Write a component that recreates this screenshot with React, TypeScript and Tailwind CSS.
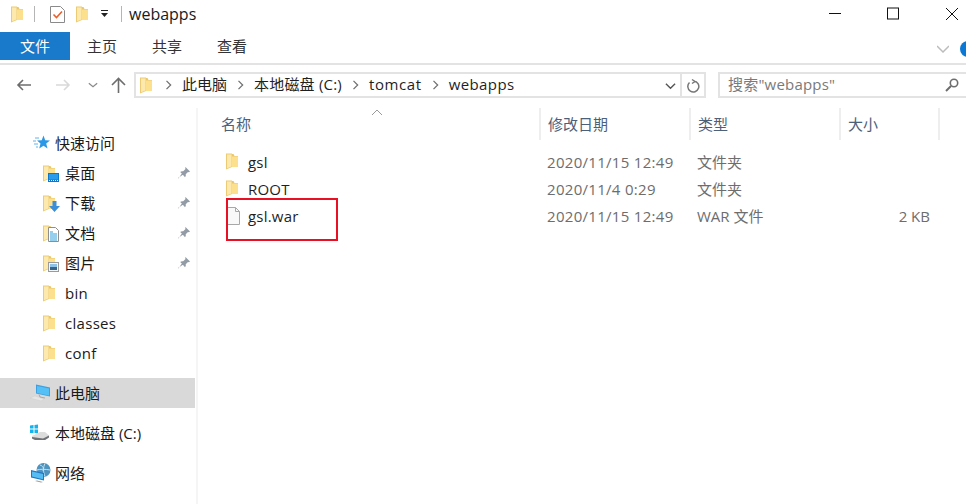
import React from 'react';

const Folder = ({ className = '' }: { className?: string }) => (
  <svg className={className} width="12" height="17" viewBox="0 0 12 17">
    <path d="M6 1h1.500l1 2H12v11H6z" fill="#e9c76e" />
    <path d="M6 3.500h6V14H6z" fill="#fde08d" />
    <path d="M0 .5h6V14l-6 2.500z" fill="#eccb74" />
    <path d="M1 1.500h4.500V13.500L1 15.200z" fill="#fde9ad" />
  </svg>
);

const Pin = () => (
  <svg width="14" height="14" viewBox="0 0 14 14">
    <path d="M8.500 1l4.500 4.500-1 .8-1-.3-2.300 2.300c.3 1.200 0 2.200-.7 3L4.800 7.600 1.500 12.500l-.5-.5 4.900-3.300-.1-.1-2.600-2.600c.8-.7 1.800-1 3-.7L8.500 3l-.3-1z" fill="#939ca6" />
  </svg>
);

const QuickIcon = () => (
  <svg width="17" height="16" viewBox="0 0 17 16">
    <path d="M10.500 .5l1.700 4.800 4.800.2-3.800 3 1.300 5-4-2.800-4.300 2.800 1.300-5-3.500-3 4.700-.2z" fill="#2a98e6" />
    <path d="M2 3h4M0 6h3M1 9h4M3 12h2" stroke="#5fb4ee" strokeWidth="1" />
  </svg>
);

const DesktopFolder = () => (
  <div className="relative w-[18px] h-[17px]">
    <Folder />
    <svg className="absolute left-[5px] top-[8px]" width="11" height="9" viewBox="0 0 11 9">
      <rect width="11" height="9" fill="#0a78d0" />
      <rect x="1" y="1" width="9" height="5.500" fill="#2b9bea" />
      <path d="M1 7.500h9" stroke="#e8f4fc" strokeDasharray="1 1" />
    </svg>
  </div>
);

const DownloadFolder = () => (
  <div className="relative w-[18px] h-[17px]">
    <Folder />
    <svg className="absolute left-[6px] top-[6px]" width="11" height="11" viewBox="0 0 11 11">
      <path d="M3.500 0h4v5H11l-5.500 6L0 5h3.500z" fill="#3a8fd8" />
    </svg>
  </div>
);

const DocFolder = () => (
  <div className="relative w-[18px] h-[17px]">
    <Folder />
    <svg className="absolute left-[5px] top-[2px]" width="11" height="15" viewBox="0 0 11 15">
      <path d="M.5.500h7l3 3v11H.5z" fill="#fff" stroke="#8e8e8e" />
      <path d="M2 5h3M2 7h7M2 9h7M2 11h7M2 13h7" stroke="#2d9fdc" />
    </svg>
  </div>
);

const PictureFolder = () => (
  <div className="relative w-[18px] h-[17px]">
    <Folder />
    <svg className="absolute left-[5px] top-[7px]" width="11" height="10" viewBox="0 0 11 10">
      <rect x=".5" y=".5" width="10" height="9" fill="#f4f6f8" stroke="#9a9a9a" />
      <rect x="2" y="2" width="7" height="3" fill="#8fc2e8" />
      <rect x="2" y="5" width="7" height="3" fill="#38648c" />
    </svg>
  </div>
);

const ThisPc = () => (
  <svg width="20" height="18" viewBox="0 0 20 18">
    <path d="M6 .5l14 3v9L6 9.500z" fill="#3c9fe0" />
    <path d="M7 2l12 2.500v7L7 9z" fill="#55c0f5" />
    <path d="M0 14l5-2 9 3-3 2z" fill="#e6e6e6" stroke="#cfcfcf" strokeWidth=".5" />
    <path d="M9 10.500l1 2.500 5 1" fill="none" stroke="#a9a9a9" />
  </svg>
);

const DriveC = () => (
  <svg width="20" height="18" viewBox="0 0 20 18">
    <path d="M0 1.500l3.500-.5v3.500H0zM4.500 1L8 .5v4H4.500zM0 5.500h3.500V9H0zM4.500 5.500H8V9.500L4.500 9z" fill="#12b3ee" />
    <path d="M2 12l8-4h5l4 3.500v2l-4 2.500H5l-3-1.500z" fill="#dcdcdc" />
    <path d="M2 13l11 1.500 6-3v2L15 16H5l-3-1.500z" fill="#6f7275" />
  </svg>
);

const Network = () => (
  <svg width="20" height="21" viewBox="0 0 20 21">
    <circle cx="12.500" cy="7" r="7" fill="#4f93bf" />
    <path d="M9 2c3 1 4 3 3 6M6 7c3-1 8-1 13 0M14 .5c-2 4-2 8 0 13" stroke="#c3e3f3" fill="none" />
    <path d="M0 7l13 3v7.500L0 14.500z" fill="#1f78c0" />
    <path d="M1 8.500l11 2.500v5.300L1 13.500z" fill="#55bdf2" />
    <path d="M4 18l6 1.500 2-.5-6-1.500z" fill="#9a9a9a" />
  </svg>
);

const CheckDoc = () => (
  <svg width="15" height="17" viewBox="0 0 15 17">
    <path d="M.5.500h10l4 4v12H.5z" fill="#fff" stroke="#8a8a8a" />
    <path d="M3.500 8.500l3 3 5.500-6" fill="none" stroke="#e8602c" strokeWidth="1.600" />
  </svg>
);

const FileIcon = () => (
  <svg width="14" height="18" viewBox="0 0 14 18">
    <path d="M.5.500h9l4 4v13H.5z" fill="#f9f9f9" stroke="#a8a8a8" />
    <path d="M9.500.500v4h4" fill="none" stroke="#a8a8a8" />
  </svg>
);

const Chevron = ({ cls, d }: { cls: string; d: string }) => (
  <svg className={cls} viewBox="0 0 12 12" width="12" height="12">
    <path d={d} fill="none" stroke="currentColor" strokeWidth="1.500" />
  </svg>
);

const navItems = [
  { label: '桌面', icon: <DesktopFolder />, pin: true },
  { label: '下载', icon: <DownloadFolder />, pin: true },
  { label: '文档', icon: <DocFolder />, pin: true },
  { label: '图片', icon: <PictureFolder />, pin: true },
  { label: 'bin', icon: <Folder /> },
  { label: 'classes', icon: <Folder /> },
  { label: 'conf', icon: <Folder /> },
];

const files = [
  { name: 'gsl', date: '2020/11/15 12:49', type: '文件夹', size: '', icon: <Folder /> },
  { name: 'ROOT', date: '2020/11/4 0:29', type: '文件夹', size: '', icon: <Folder /> },
  { name: 'gsl.war', date: '2020/11/15 12:49', type: 'WAR 文件', size: '2 KB', icon: <FileIcon /> },
];

const crumbs = [
  { label: '此电脑', cls: '' },
  { label: '本地磁盘 (C:)', cls: 'tracking-[0.2px]' },
  { label: 'tomcat', cls: 'tracking-[0.6px]' },
  { label: 'webapps', cls: 'tracking-[0.4px]' },
];

export default function App() {
  return (
    <div className="w-[966px] h-[504px] overflow-hidden bg-white text-[15px] leading-5 text-[#1a1a1a] font-['Open_Sans','Noto_Sans_CJK_SC',sans-serif]">
      {/* title bar */}
      <div className="h-8 flex items-center pb-[4px]">
        <Folder className="ml-[11px]" />
        <div className="w-px h-4 bg-[#b5b5b5] ml-[11px]" />
        <div className="ml-[15px] flex"><CheckDoc /></div>
        <Folder className="ml-[11px]" />
        <svg className="ml-[12px]" width="9" height="8" viewBox="0 0 9 8">
          <path d="M1 .500h7" stroke="#222" />
          <path d="M1 3h7L4.500 7z" fill="#222" />
        </svg>
        <div className="w-px h-4 bg-[#b5b5b5] ml-[12px]" />
        <span className="ml-[7px] text-[16px]">webapps</span>
        <div className="ml-auto flex items-center">
          <svg width="58" height="14" viewBox="0 0 58 14">
            <path d="M0 6.500h12" stroke="#111" />
          </svg>
          <svg width="59" height="14" viewBox="0 0 59 14">
            <rect x=".5" y="1" width="11" height="11" fill="none" stroke="#111" />
          </svg>
          <svg width="20" height="14" viewBox="0 0 20 14">
            <path d="M0 1l12 12M12 1L0 13" stroke="#111" />
          </svg>
        </div>
      </div>

      {/* ribbon tabs */}
      <div className="h-[33px] border-b-2 border-[#e3e3e3] flex items-start">
        <div className="w-[70px] h-7 bg-[#1979ca] text-white flex items-center justify-center">文件</div>
        <div className="w-[82px] h-7 pl-[17px] flex items-center text-[#333]">主页</div>
        <div className="w-[65px] h-7 flex items-center text-[#333]">共享</div>
        <div className="h-7 flex items-center text-[#333]">查看</div>
        <div className="ml-auto mt-[9px] flex items-center">
          <Chevron cls="text-[#bcbcbc] mr-[11px]" d="M0 3l6 6 6-6" />
          <div className="w-4 h-4 mr-[-10px] rounded-full bg-[#0a78d4]" />
        </div>
      </div>

      {/* address bar */}
      <div className="h-[43px] flex items-center pb-[3px]">
        <svg className="ml-4" width="16" height="12" viewBox="0 0 16 12">
          <path d="M15 6H2M7 1L2 6l5 5" fill="none" stroke="#6d6d6d" strokeWidth="1.600" />
        </svg>
        <svg className="ml-[23px]" width="16" height="12" viewBox="0 0 16 12">
          <path d="M1 6h13M9 1l5 5-5 5" fill="none" stroke="#d9d9d9" strokeWidth="1.600" />
        </svg>
        <Chevron cls="ml-[17px] text-[#8a8a8a] w-[10px] h-[10px]" d="M1 4l5 4 5-4" />
        <svg className="ml-[13px]" width="15" height="16" viewBox="0 0 15 16">
          <path d="M7.500 16V2M1 8l6.500-6.500L14 8" fill="none" stroke="#6d6d6d" strokeWidth="1.600" />
        </svg>
        <div className="ml-[8px] w-[572px] h-[26px] border-2 border-[#e3e3e3] flex items-center">
          <Folder className="ml-[4px] mr-[3px]" />
          {crumbs.map(c => (
            <React.Fragment key={c.label}>
              <Chevron cls="ml-[9px] mr-[8px] w-[10px] h-[10px] text-[#707070]" d="M3 1l5 5-5 5" />
              <span className={`text-[#1f1f1f] pb-[2px] ${c.cls}`}>{c.label}</span>
            </React.Fragment>
          ))}
          <Chevron cls="ml-auto mr-[4px] text-[#555] w-[11px] h-[11px]" d="M1 4l5 5 5-5" />
          <div className="w-[24px] h-full border-l-2 border-[#e3e3e3] flex items-center justify-center">
            <svg width="15" height="15" viewBox="0 0 15 15">
              <path d="M6 1.500l3 2-3 2M8 3a5.500 5.500 0 1 1-4.500 1.500" fill="none" stroke="#777" strokeWidth="1.500" />
            </svg>
          </div>
        </div>
        <div className="ml-[12px] flex-1 h-[26px] border-2 border-r-0 border-[#e3e3e3] flex items-center pl-[8px] pr-[7px] text-[#7a7a7a]">
          <span className="tracking-[0.2px] pb-[2px]">搜索"webapps"</span>
          <svg className="ml-auto" width="14" height="14" viewBox="0 0 14 14">
            <circle cx="9" cy="5" r="3.700" fill="none" stroke="#6d6d6d" strokeWidth="1.600" />
            <path d="M6 8l-5 5" stroke="#6d6d6d" strokeWidth="2" />
          </svg>
        </div>
      </div>

      <div className="flex h-[396px]">
        {/* nav pane */}
        <div className="w-[198px] shrink-0 border-r-2 border-[#f5f5f5] pt-5 pr-[1px]">
          <div className="h-[30px] flex items-center pl-[33px]">
            <QuickIcon />
            <span className="ml-[5px]">快速访问</span>
          </div>
          {navItems.map(item => (
            <div key={item.label} className="h-[30px] flex items-center pl-[43px] pr-[4px]">
              <div className="w-[22px] flex">{item.icon}</div>
              <span className="tracking-[0.3px]">{item.label}</span>
              {item.pin && <div className="ml-auto flex"><Pin /></div>}
            </div>
          ))}
          <div className="h-[30px] mt-[10px] bg-[#d9d9d9] flex items-center pl-[30px]">
            <ThisPc />
            <span className="ml-[5px]">此电脑</span>
          </div>
          <div className="h-[30px] mt-[10px] flex items-center pl-[30px]">
            <DriveC />
            <span className="ml-[5px]">本地磁盘 (C:)</span>
          </div>
          <div className="h-[30px] mt-[10px] flex items-center pl-[31px]">
            <Network />
            <span className="ml-[4px]">网络</span>
          </div>
        </div>

        {/* file list */}
        <div className="relative flex-1 pl-[23px]">
          <div className="h-8 flex text-[#4c607a]">
            <div className="relative w-[318px] flex items-center">
              名称
              <svg className="absolute left-[150px] top-[1px]" width="12" height="7" viewBox="0 0 12 7">
                <path d="M1 6l5-5 5 5" fill="none" stroke="#9a9a9a" />
              </svg>
            </div>
            <div className="w-[150px] border-l-2 border-[#eeeeee] pl-[7px] flex items-center">修改日期</div>
            <div className="w-[150px] border-l-2 border-[#eeeeee] pl-[7px] flex items-center">类型</div>
            <div className="w-[101px] border-x-2 border-[#eeeeee] pl-[7px] flex items-center">大小</div>
          </div>
          <div className="mt-[8px]">
            {files.map(f => (
              <div key={f.name} className="h-[27px] flex items-center">
                <div className="w-[5px]" />
                <div className="w-[22px] flex">{f.icon}</div>
                <div className="w-[299px] text-[#1f1f1f] tracking-[0.2px]">{f.name}</div>
                <div className="w-[150px] text-[#6d6d6d] tracking-[0.3px]">{f.date}</div>
                <div className="w-[150px] text-[#6d6d6d]">{f.type}</div>
                <div className="w-[83px] text-right text-[#6d6d6d]">{f.size}</div>
              </div>
            ))}
          </div>
          {/* annotation box */}
          <div className="absolute left-[28px] top-[90px] w-[112px] h-[43px] border-2 border-[#e81123]" />
        </div>
      </div>
    </div>
  );
}
